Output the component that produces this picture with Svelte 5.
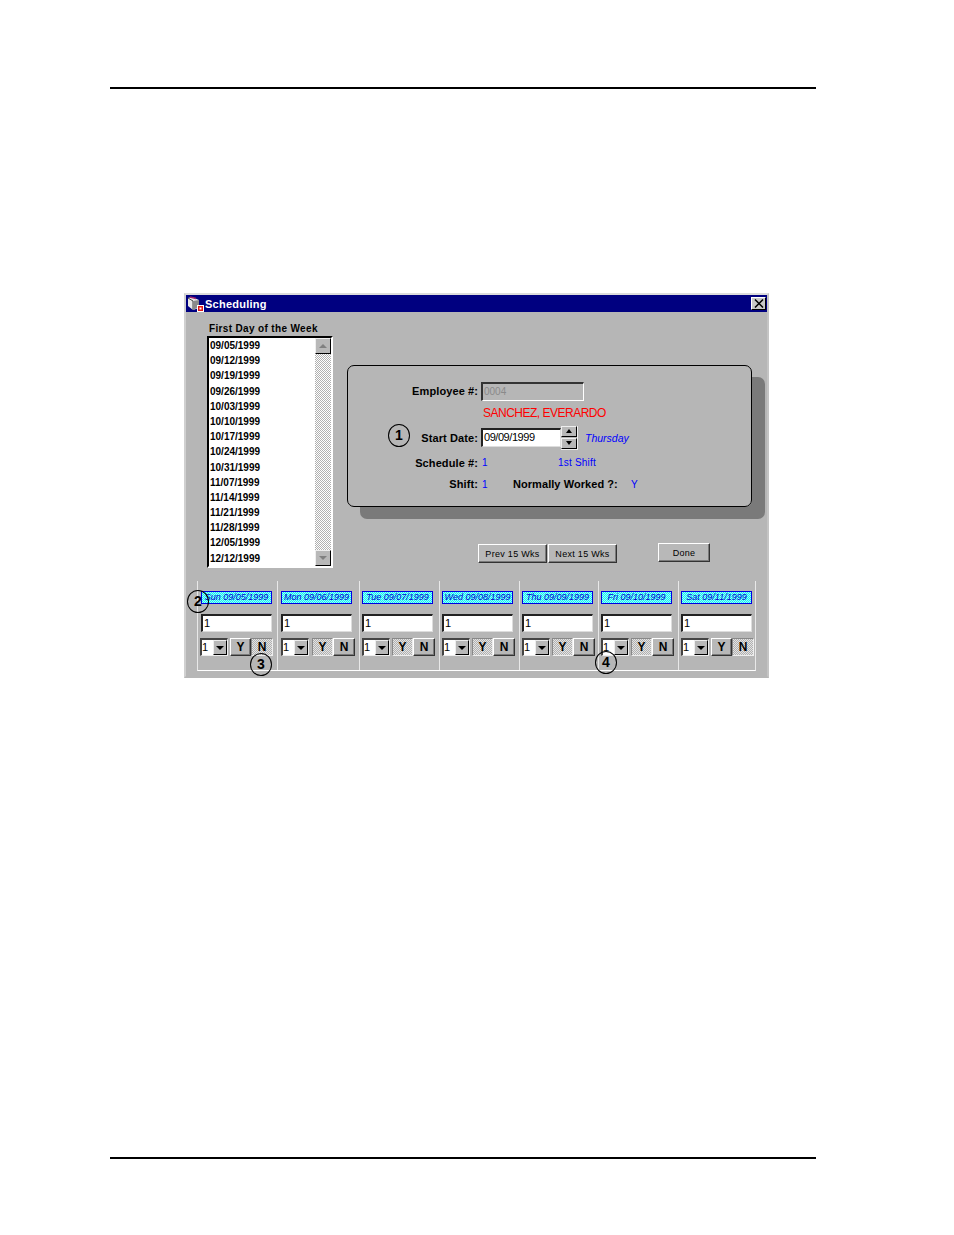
<script>
	const dates = [
		'09/05/1999', '09/12/1999', '09/19/1999', '09/26/1999', '10/03/1999',
		'10/10/1999', '10/17/1999', '10/24/1999', '10/31/1999', '11/07/1999',
		'11/14/1999', '11/21/1999', '11/28/1999', '12/05/1999', '12/12/1999'
	];

	// worked = true means the Y button is the one held down
	const days = [
		{ label: 'Sun 09/05/1999', worked: false, width: 80 },
		{ label: 'Mon 09/06/1999', worked: true, width: 82 },
		{ label: 'Tue 09/07/1999', worked: true, width: 80 },
		{ label: 'Wed 09/08/1999', worked: true, width: 80 },
		{ label: 'Thu 09/09/1999', worked: true, width: 79 },
		{ label: 'Fri 09/10/1999', worked: true, width: 80 },
		{ label: 'Sat 09/11/1999', worked: false, width: 77 }
	];
</script>

<div class="page">
	<div class="rule"></div>

	<div class="window">
		<div class="titlebar">
			<svg class="app-icon" width="17" height="16" viewBox="0 0 17 16">
				<path d="M1 2 L5 1 L12 4 L12 12 L6 14 L1 10 Z" fill="#e8e8e8" />
				<path d="M1 2 L6 5 L6 14" fill="none" stroke="#444" stroke-width="1" />
				<path d="M6 5 L12 4 L12 11 L6 14 Z" fill="#8a8a8a" />
				<path d="M3 1 L9 2.5" stroke="#a0206a" stroke-width="1.4" />
				<rect x="10" y="9" width="7" height="7" fill="#fff" />
				<rect x="11" y="10" width="5" height="5" fill="#e01818" />
				<rect x="12.5" y="11.5" width="2" height="2" fill="#fff" />
			</svg>
			<span class="title">Scheduling</span>
			<span class="close">
				<svg width="10" height="9" viewBox="0 0 10 9">
					<path d="M1 0.5 L9 8.5 M9 0.5 L1 8.5" stroke="#000" stroke-width="1.5" />
				</svg>
			</span>
		</div>

		<div class="body">
			<div class="top">
				<div class="week-col">
					<div class="week-label">First Day of the Week</div>
					<div class="list">
						<div class="list-items">
							{#each dates as d}
								<div class="list-item">{d}</div>
							{/each}
						</div>
						<div class="scrollbar">
							<span class="scroll-btn"><i class="tri up"></i></span>
							<span class="scroll-btn"><i class="tri down"></i></span>
						</div>
					</div>
				</div>

				<div class="main-col">
					<div class="panel">
						<div class="field-label">Employee #:</div>
						<div class="field-row emp-row"><span class="emp-box">0004</span></div>

						<div></div>
						<div class="field-row name">SANCHEZ, EVERARDO</div>

						<div class="field-label">Start Date:</div>
						<div class="field-row">
							<span class="date-box">09/09/1999</span>
							<span class="spinner">
								<span class="spin-btn"><i class="tri up small"></i></span>
								<span class="spin-btn"><i class="tri down small"></i></span>
							</span>
							<span class="weekday">Thursday</span>
						</div>

						<div class="field-label">Schedule #:</div>
						<div class="field-row blue">
							<span class="num">1</span>
							<span class="shift-name">1st Shift</span>
						</div>

						<div class="field-label">Shift:</div>
						<div class="field-row blue">
							<span class="num short">1</span>
							<span class="field-label inline">Normally Worked ?:</span>
							<span class="yes">Y</span>
						</div>
					</div>

					<div class="actions">
						<div class="pager">
							<button class="btn pager-btn">Prev 15 Wks</button>
							<button class="btn pager-btn">Next 15 Wks</button>
						</div>
						<button class="btn done">Done</button>
					</div>
				</div>
			</div>

			<div class="days">
				{#each days as day}
					<div class="day" style="width: {day.width}px">
						<div class="day-head">{day.label}</div>
						<div class="day-input">1</div>
						<div class="day-controls">
							<span class="combo">
								<span class="combo-val">1</span>
								<span class="combo-btn"><i class="tri down"></i></span>
							</span>
							<span class="toggle yes-btn" class:held={day.worked}>Y</span>
							<span class="toggle" class:held={!day.worked}>N</span>
						</div>
					</div>
				{/each}
			</div>

			<span class="callout c1">1</span>
			<span class="callout c2">2</span>
			<span class="callout c3">3</span>
			<span class="callout c4">4</span>
		</div>
	</div>

	<div class="rule bottom"></div>
</div>

<style>
	:global(body) {
		margin: 0;
		background: #fff;
		font-family: 'Liberation Sans', Arial, sans-serif;
	}

	.page {
		height: 1235px;
		padding-top: 87px;
		box-sizing: border-box;
	}

	.rule {
		width: 706px;
		height: 2px;
		margin-left: 110px;
		background: #000;
	}

	.rule.bottom {
		margin-top: 479px;
	}

	.window {
		width: 585px;
		height: 385px;
		margin: 204px 0 0 184px;
		box-sizing: border-box;
		border: 2px solid;
		border-color: #dcdcdc #c4c4c4 #b6b6b6 #d0d0d0;
		background: #b6b6b6;
		display: flex;
		flex-direction: column;
	}

	.titlebar {
		height: 17px;
		background: #000080;
		display: flex;
		align-items: center;
		color: #fff;
		flex: none;
	}

	.app-icon {
		margin-left: 1px;
	}

	.title {
		margin-left: 1px;
		font-size: 11px;
		font-weight: bold;
		letter-spacing: 0.25px;
	}

	.close {
		margin-left: auto;
		margin-right: 1px;
		width: 15px;
		height: 13px;
		box-sizing: border-box;
		background: #c8c8c8;
		border: 1px solid;
		border-color: #fff #000 #000 #fff;
		display: flex;
		align-items: center;
		justify-content: center;
	}

	.body {
		position: relative;
		flex: 1;
		padding-left: 11px;
	}

	.top {
		display: flex;
		height: 269px;
	}

	.week-col {
		width: 150px;
		padding: 11px 0 0 10px;
		box-sizing: border-box;
		flex: none;
	}

	.week-label {
		font-size: 10px;
		font-weight: bold;
		line-height: 12px;
		letter-spacing: 0.35px;
		color: #000;
		margin-left: 2px;
	}

	.list {
		width: 126px;
		height: 232px;
		margin-top: 1px;
		box-sizing: border-box;
		border: 2px solid;
		border-color: #000 #fff #fff #000;
		background: #fff;
		display: flex;
	}

	.list-items {
		flex: 1;
		padding: 0 0 0 1px;
	}

	.list-item {
		height: 15.2px;
		line-height: 15.2px;
		font-size: 10px;
		font-weight: bold;
		color: #000;
	}

	.scrollbar {
		width: 16px;
		display: flex;
		flex-direction: column;
		justify-content: space-between;
		background: repeating-conic-gradient(#b0b0b0 0 25%, #fff 0 50%) 0 0 / 2px 2px;
	}

	.scroll-btn {
		height: 16px;
		box-sizing: border-box;
		background: #b8b8b8;
		border: 1px solid;
		border-color: #eee #000 #000 #eee;
		display: flex;
		align-items: center;
		justify-content: center;
	}

	.tri {
		width: 0;
		height: 0;
		border-left: 4px solid transparent;
		border-right: 4px solid transparent;
		display: block;
	}

	.tri.up {
		border-bottom: 4px solid #000;
	}

	.tri.down {
		border-top: 4px solid #000;
	}

	.tri.small {
		border-left-width: 3px;
		border-right-width: 3px;
	}

	.scroll-btn .tri.up {
		border-bottom-color: #808080;
	}

	.scroll-btn .tri.down {
		border-top-color: #808080;
	}

	.main-col {
		flex: 1;
		padding-top: 53px;
	}

	.panel {
		width: 405px;
		height: 142px;
		box-sizing: border-box;
		padding-top: 16px;
		border: 1px solid #000;
		border-radius: 7px;
		box-shadow: 13px 12px 0 #7a7a7a;
		display: grid;
		grid-template-columns: 130px 1fr;
		grid-template-rows: 18px 25px 25px 25px 18px;
	}

	.field-label {
		font-size: 11px;
		font-weight: bold;
		letter-spacing: 0.1px;
		text-align: right;
		color: #000;
		align-self: center;
	}

	.field-label.inline {
		width: 105px;
		text-align: left;
		letter-spacing: 0.06px;
	}

	.field-row {
		padding-left: 3px;
		display: flex;
		align-items: center;
		font-size: 10px;
		white-space: nowrap;
	}

	.emp-row {
		align-items: flex-start;
	}

	.emp-box {
		width: 103px;
		height: 19px;
		box-sizing: border-box;
		padding-left: 1px;
		border: 2px solid;
		border-color: #333 #fff #fff #333;
		border-right-width: 1px;
		border-bottom-width: 1px;
		font-size: 10px;
		line-height: 15px;
		color: #8a8a8a;
	}

	.name {
		padding-left: 5px;
		font-size: 12px;
		letter-spacing: -0.5px;
		color: #f00;
	}

	.date-box {
		width: 80px;
		height: 19px;
		box-sizing: border-box;
		padding-left: 1px;
		background: #fff;
		border: 2px solid;
		border-color: #222 #ddd #ddd #222;
		border-right-width: 1px;
		border-bottom-width: 1px;
		font-size: 11px;
		letter-spacing: -0.45px;
		line-height: 15px;
		color: #000;
	}

	.spinner {
		width: 17px;
		height: 24px;
		display: flex;
		flex-direction: column;
		justify-content: space-between;
		box-sizing: border-box;
		border-right: 1px solid #eee;
		border-bottom: 1px solid #eee;
	}

	.spin-btn {
		height: 11px;
		box-sizing: border-box;
		background: #b8b8b8;
		border: 1px solid;
		border-color: #eee #000 #000 #eee;
		display: flex;
		align-items: center;
		justify-content: center;
	}

	.weekday {
		margin-left: 7px;
		font-size: 10.5px;
		font-style: italic;
		color: #00f;
	}

	.blue {
		color: #00f;
	}

	.num {
		width: 77px;
		padding-left: 1px;
		box-sizing: border-box;
	}

	.num.short {
		width: 32px;
	}

	.shift-name {
		letter-spacing: 0.2px;
	}

	.yes {
		margin-left: 13px;
	}

	.actions {
		margin: 37px 0 0 131px;
		display: flex;
		align-items: flex-start;
	}

	.pager {
		display: flex;
		gap: 1px;
	}

	.btn {
		height: 19px;
		padding: 0;
		font: 9px 'Liberation Sans', Arial, sans-serif;
		letter-spacing: 0.3px;
		color: #000;
		background: #b8b8b8;
		border: 1px solid;
		border-color: #fff #333 #333 #fff;
		box-shadow: inset -1px -1px 0 #7a7a7a;
		box-sizing: border-box;
	}

	.pager-btn {
		width: 69px;
	}

	.done {
		width: 52px;
		margin: -1px 0 0 41px;
	}

	.days {
		display: flex;
		width: 559px;
		height: 90px;
		box-sizing: border-box;
		border-bottom: 1px solid #fff;
		border-right: 1px solid #e8e8e8;
		border-left: 1px solid #e8e8e8;
	}

	.day {
		box-sizing: border-box;
		border-right: 1px solid #e8e8e8;
		padding: 10px 0 0 2px;
		flex: none;
	}

	.day:nth-child(-n + 2) {
		padding-left: 3px;
	}

	.day:last-child {
		border-right: none;
	}

	.day-head {
		width: 71px;
		height: 13px;
		box-sizing: border-box;
		border: 1px solid #0000e0;
		background: repeating-conic-gradient(#00ffff 0 25%, #b0f0f0 0 50%) 0 0 / 2px 2px;
		font-size: 9px;
		font-style: italic;
		line-height: 11px;
		text-align: center;
		color: #0000d0;
		white-space: nowrap;
		overflow: hidden;
	}

	.day-input {
		width: 71px;
		height: 18px;
		margin-top: 10px;
		box-sizing: border-box;
		padding-left: 1px;
		background: #fff;
		border: 2px solid;
		border-color: #222 #ddd #ddd #222;
		border-right-width: 1px;
		border-bottom-width: 1px;
		font-size: 11px;
		line-height: 15px;
		color: #000;
	}

	.day-controls {
		display: flex;
		margin-top: 6px;
	}

	.combo {
		width: 28px;
		height: 18px;
		margin-right: 2px;
		box-sizing: border-box;
		background: #fff;
		border: 2px solid;
		border-color: #444 #eee #eee #444;
		border-right-width: 1px;
		border-bottom-width: 1px;
		display: flex;
		font-size: 11px;
		line-height: 14px;
		color: #000;
	}

	.day:first-child .combo {
		margin-left: -1px;
	}

	.day:nth-child(2) .combo {
		margin-right: 3px;
	}

	.combo-val {
		flex: 1;
	}

	.combo-btn {
		width: 14px;
		background: #b8b8b8;
		border: 1px solid;
		border-color: #eee #000 #000 #eee;
		box-sizing: border-box;
		display: flex;
		align-items: center;
		justify-content: center;
	}

	.toggle {
		width: 22px;
		height: 18px;
		box-sizing: border-box;
		background: #b8b8b8;
		border: 1px solid;
		border-color: #fff #333 #333 #fff;
		box-shadow: inset -1px -1px 0 #7a7a7a;
		font-size: 12px;
		font-weight: bold;
		line-height: 16px;
		text-align: center;
		color: #000;
	}

	.toggle.yes-btn {
		width: 21px;
	}

	.toggle.held {
		border-color: #888 #eee #eee #888;
		box-shadow: none;
		background: repeating-conic-gradient(#b0b0b0 0 25%, #e4e4e4 0 50%) 0 0 / 2px 2px;
	}

	.callout {
		position: absolute;
		width: 22px;
		height: 23px;
		box-sizing: border-box;
		border: 1px solid #000;
		border-radius: 50%;
		font-size: 14px;
		font-weight: bold;
		line-height: 21px;
		text-align: center;
		color: #000;
	}

	.c1 { left: 202px; top: 112px; }
	.c2 { left: 1px; top: 278px; }
	.c3 { left: 64px; top: 341px; }
	.c4 { left: 409px; top: 339px; }
</style>
